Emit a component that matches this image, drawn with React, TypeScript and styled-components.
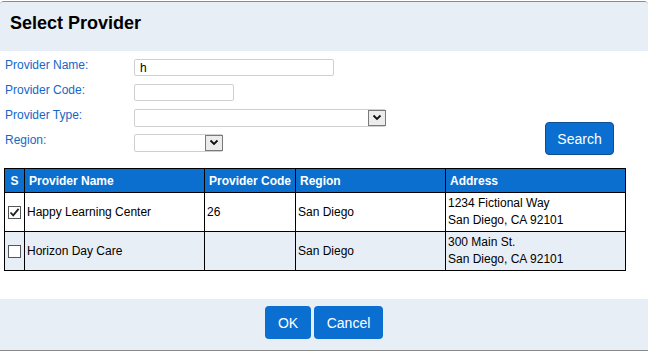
import React from "react";
import styled, { createGlobalStyle } from "styled-components";

const GlobalStyle = createGlobalStyle`
  html, body {
    margin: 0;
    padding: 0;
    background: #fff;
  }
  body {
    font-family: "Liberation Sans", Arial, sans-serif;
    font-size: 12px;
    color: #000;
  }
`;

const providers = [
  {
    selected: true,
    name: "Happy Learning Center",
    code: "26",
    region: "San Diego",
    address: ["1234 Fictional Way", "San Diego, CA 92101"],
  },
  {
    selected: false,
    name: "Horizon Day Care",
    code: "",
    region: "San Diego",
    address: ["300 Main St.", "San Diego, CA 92101"],
  },
];

function Chevron() {
  return (
    <svg width="10" height="7" viewBox="0 0 10 7">
      <path d="M1.5 1.5 L5 5 L8.5 1.5" fill="none" stroke="#111" strokeWidth="1.8" />
    </svg>
  );
}

function Select({ width }: { width: number }) {
  return (
    <SelectBox $width={width}>
      <SelectArrow>
        <Chevron />
      </SelectArrow>
    </SelectBox>
  );
}

function Check({ checked }: { checked: boolean }) {
  return (
    <CheckBox>
      {checked && (
        <svg width="11" height="11" viewBox="0 0 11 11">
          <path d="M1.5 5.5 L4.2 8.3 L9.6 1.8" fill="none" stroke="#222" strokeWidth="1.8" />
        </svg>
      )}
    </CheckBox>
  );
}

export default function App() {
  return (
    <>
      <GlobalStyle />
      <Dialog>
        <Header>
          <Title>Select Provider</Title>
        </Header>
        <Body>
          <SearchForm>
            <Fields>
              <Label>Provider Name:</Label>
              <TextInput $width={200} defaultValue="h" />
              <Label>Provider Code:</Label>
              <TextInput $width={100} />
              <Label>Provider Type:</Label>
              <Select width={252} />
              <Label>Region:</Label>
              <Select width={89} />
            </Fields>
            <SearchButton>Search</SearchButton>
          </SearchForm>
          <Table>
            <colgroup>
              <col style={{ width: 20 }} />
              <col style={{ width: 180 }} />
              <col style={{ width: 91 }} />
              <col style={{ width: 150 }} />
              <col />
            </colgroup>
            <thead>
              <tr>
                <Th $center>S</Th>
                <Th>Provider Name</Th>
                <Th>Provider Code</Th>
                <Th>Region</Th>
                <Th>Address</Th>
              </tr>
            </thead>
            <tbody>
              {providers.map((p, i) => (
                <Row key={p.name} $alt={i % 2 === 1}>
                  <Td $center>
                    <Check checked={p.selected} />
                  </Td>
                  <Td>{p.name}</Td>
                  <Td>{p.code}</Td>
                  <Td>{p.region}</Td>
                  <AddressCell>
                    {p.address.map((line) => (
                      <div key={line}>{line}</div>
                    ))}
                  </AddressCell>
                </Row>
              ))}
            </tbody>
          </Table>
        </Body>
        <Footer>
          <ActionButton $width={46}>OK</ActionButton>
          <ActionButton $width={69}>Cancel</ActionButton>
        </Footer>
      </Dialog>
    </>
  );
}

const Dialog = styled.div`
  width: 648px;
  height: 350px;
  margin-top: 1px;
  border-top: 1px solid #8a8a8a;
  border-bottom: 1px solid #8a8a8a;
  border-radius: 4px 4px 0 0;
  display: flex;
  flex-direction: column;
  overflow: hidden;
  box-sizing: border-box;
  background: #fff;
`;

const Header = styled.div`
  height: 49px;
  background: #e8eef6;
  display: flex;
  align-items: center;
  padding: 0 10px;
  padding-bottom: 6px;
  box-sizing: border-box;
`;

const Title = styled.h1`
  margin: 0;
  font-size: 18px;
  font-weight: bold;
  color: #000;
`;

const Body = styled.div`
  flex: 1;
  padding: 6px 22px 0 4px;
`;

const SearchForm = styled.div`
  display: flex;
  align-items: flex-end;
  justify-content: space-between;
  padding-right: 12px;
  margin-bottom: 11px;
`;

const Fields = styled.div`
  display: grid;
  grid-template-columns: 130px auto;
  grid-auto-rows: 25px;
  align-items: center;
  justify-items: start;
`;

const Label = styled.span`
  color: #1467c8;
  font-size: 12px;
  align-self: start;
  padding: 1px 0 0 1px;
`;

const TextInput = styled.input<{ $width: number }>`
  width: ${(p) => p.$width}px;
  height: 17px;
  box-sizing: border-box;
  border: 1px solid #cfcfcf;
  border-radius: 2px;
  padding: 0 5px;
  font-family: "Liberation Sans", Arial, sans-serif;
  font-size: 12px;
  color: #000;
  outline: none;
  margin-top: -4px;
`;

const SelectBox = styled.div<{ $width: number }>`
  width: ${(p) => p.$width}px;
  height: 18px;
  box-sizing: border-box;
  border: 1px solid #cfcfcf;
  border-radius: 2px;
  display: flex;
  justify-content: flex-end;
  margin-top: -4px;
`;

const SelectArrow = styled.div`
  width: 18px;
  height: 16px;
  box-sizing: border-box;
  border: 1px solid #7a7a7a;
  background: #ececec;
  display: flex;
  align-items: center;
  justify-content: center;
  margin: 0 -1px 0 0;
`;

const SearchButton = styled.button`
  width: 69px;
  height: 33px;
  margin-bottom: 2px;
  background: #0a6fd1;
  color: #fff;
  border: 1px solid #0d4f94;
  border-radius: 4px;
  font-family: "Liberation Sans", Arial, sans-serif;
  font-size: 14px;
  padding: 0;
`;

const Table = styled.table`
  width: 622px;
  border-collapse: collapse;
  table-layout: fixed;
  border: 1px solid #000;
`;

const Th = styled.th<{ $center?: boolean }>`
  height: 23px;
  background: #0b6fcf;
  color: #fff;
  font-size: 12px;
  font-weight: bold;
  text-align: ${(p) => (p.$center ? "center" : "left")};
  padding: 0 4px;
  border-left: 1px solid #000;
  border-bottom: 1px solid #000;
  white-space: nowrap;
  overflow: hidden;
`;

const Row = styled.tr<{ $alt: boolean }>`
  background: ${(p) => (p.$alt ? "#e8eef6" : "#fff")};
`;

const Td = styled.td<{ $center?: boolean }>`
  height: 38px;
  padding: 0 2px;
  border: 1px solid #000;
  font-size: 12px;
  vertical-align: middle;
  text-align: ${(p) => (p.$center ? "center" : "left")};
  ${(p) => (p.$center ? "padding: 0;" : "")}
`;

const AddressCell = styled(Td)`
  line-height: 17px;
`;

const CheckBox = styled.span`
  display: inline-flex;
  width: 13px;
  height: 13px;
  box-sizing: border-box;
  border: 1px solid #555;
  background: #fff;
  align-items: center;
  justify-content: center;
  vertical-align: middle;
`;

const Footer = styled.div`
  height: 51px;
  background: #e8eef6;
  display: flex;
  justify-content: center;
  align-items: flex-start;
  gap: 3px;
  padding-top: 7px;
  box-sizing: border-box;
`;

const ActionButton = styled.button<{ $width: number }>`
  width: ${(p) => p.$width}px;
  height: 33px;
  background: #0a6fd1;
  color: #fff;
  border: none;
  border-radius: 4px;
  font-family: "Liberation Sans", Arial, sans-serif;
  font-size: 14px;
  padding: 0;
`;
